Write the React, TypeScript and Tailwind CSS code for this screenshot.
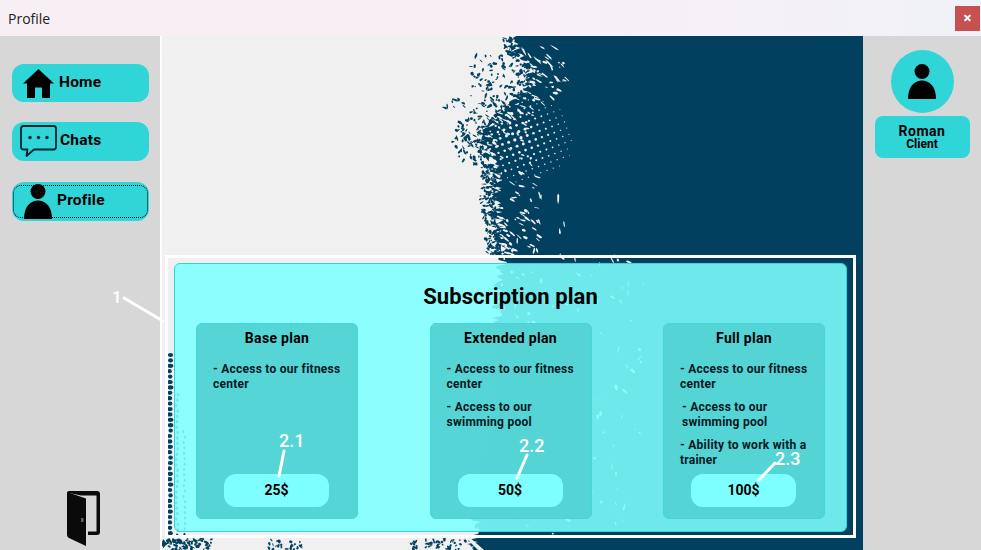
import React from "react";

const DARK = "#01405f";
const LIGHT = "#f0f0f0";

// seeded so the picture is the same on each run
const makeRandom = (seed: number) => () => {
   seed = (seed + 0x6d2b79f5) | 0;
   let t = Math.imul(seed ^ (seed >>> 15), 1 | seed);
   t = (t + Math.imul(t ^ (t >>> 7), 61 | t)) ^ t;
   return ((t ^ (t >>> 14)) >>> 0) / 4294967296;
};

const edgeKeys: [number, number][] = [
   [36, 512], [50, 516], [70, 530], [90, 528], [104, 506], [125, 490], [145, 482], [165, 494],
   [180, 497], [200, 495], [230, 500], [255, 502], [300, 497], [400, 495], [500, 478], [550, 472],
];

const edgeAt = (y: number) => {
   for (let i = 1; i < edgeKeys.length; i++) {
      const [y0, x0] = edgeKeys[i - 1];
      const [y1, x1] = edgeKeys[i];
      if (y <= y1) return x0 + ((x1 - x0) * (y - y0)) / (y1 - y0);
   }
   return 472;
};

const buildArt = () => {
   const rnd = makeRandom(41);

   // jagged little shard instead of a clean ellipse
   const shard = (x: number, y: number, len: number, thick: number, deg: number) => {
      const a = (deg * Math.PI) / 180;
      const n = 6;
      const out: string[] = [];
      for (let i = 0; i < n; i++) {
         const t = (i / n) * Math.PI * 2;
         const k = 0.6 + rnd() * 0.8;
         const px = Math.cos(t) * len * k;
         const py = Math.sin(t) * thick * k;
         out.push(`${(x + px * Math.cos(a) - py * Math.sin(a)).toFixed(1)},${(y + px * Math.sin(a) + py * Math.cos(a)).toFixed(1)}`);
      }
      return out.join(" ");
   };

   const pts: string[] = ["861,36"];
   for (let y = 36; y <= 550; y += 2) pts.push(`${(edgeAt(y) + (rnd() - 0.5) * 12).toFixed(1)},${y}`);
   pts.push("861,550");

   const darkSpecks: string[] = [];
   const lightSpecks: string[] = [];
   for (let i = 0; i < 520; i++) {
      const y = 38 + rnd() * 217;
      const reach = y < 55 ? 10 : y < 110 ? 60 : y < 165 ? 32 : 14;
      const d = Math.pow(rnd(), 1.5) * reach;
      darkSpecks.push(shard(edgeAt(y) - d - 1, y, 0.7 + rnd() * 2.4, 0.5 + rnd() * 1.1, rnd() * 180));
   }
   // light bites along the inner side of the edge
   for (let i = 0; i < 170; i++) {
      const y = 60 + rnd() * 195;
      const d = Math.pow(rnd(), 1.8) * 40;
      lightSpecks.push(shard(edgeAt(y) + d + 1, y, 0.8 + rnd() * 3.4, 0.4 + rnd() * 1, 10 + rnd() * 40));
   }
   for (let i = 0; i < 140; i++) {
      const y = 255 + rnd() * 285;
      const d = Math.pow(rnd(), 1.3) * 150;
      lightSpecks.push(shard(edgeAt(y) + d + 2, y, 0.6 + rnd() * 3.2, 0.4 + rnd() * 1, 20 + rnd() * 90));
   }
   for (let i = 0; i < 14; i++) {
      lightSpecks.push(shard(515 + rnd() * 50, 42 + rnd() * 40, 1.5 + rnd() * 4, 0.8, 30 + rnd() * 40));
      lightSpecks.push(shard(500 + rnd() * 65, 195 + rnd() * 58, 1.5 + rnd() * 4, 0.9, rnd() * 120));
   }

   // rotated halftone of light dots, fading out towards the dark side
   const dots: number[][] = [];
   const a = (-20 * Math.PI) / 180;
   for (let u = -80; u <= 80; u += 6.6) {
      for (let v = -60; v <= 60; v += 6.6) {
         const x = 522 + u * Math.cos(a) - v * Math.sin(a);
         const y = 138 + u * Math.sin(a) + v * Math.cos(a);
         const r = Math.hypot((x - 516) / 58, (y - 138) / 46);
         if (r < 1 && x > edgeAt(y) + 1) dots.push([x, y, 1.55 * (1.1 - r * 0.8)]);
      }
   }

   // dark halftone strip on the left and the specks under the frame
   const strip: number[][] = [];
   for (let y = 355; y < 536; y += 5.4) {
      strip.push([170 + (rnd() - 0.5) * 1.5, y, 2.2 + rnd() * 0.8, 2.1]);
      if (y > 390) strip.push([176 + rnd() * 2, y + 2, 1.3, 1.8]);
      if (y > 430) strip.push([183 + rnd() * 2, y + 1, 1, 1.5]);
   }
   const bottom: string[] = [];
   for (let i = 0; i < 150; i++) {
      const zone = rnd();
      const x = zone < 0.5 ? 163 + rnd() * 50 : zone < 0.66 ? 265 + rnd() * 38 : 410 + rnd() * 62;
      bottom.push(shard(x, 539 + rnd() * 11, 0.8 + rnd() * 1.7, 0.6 + rnd() * 1.2, rnd() * 180));
   }
   return { polygon: pts.join(" "), darkSpecks, lightSpecks, dots, strip, bottom };
};

const art = buildArt();

const SplashArt = () => (
   <svg viewBox="162 36 699 514" className="absolute inset-0 h-full w-full">
      <rect x="162" y="36" width="699" height="514" fill={LIGHT} />
      <polygon points={art.polygon} fill={DARK} />
      {art.darkSpecks.map((p, i) => (
         <polygon key={i} points={p} fill={DARK} />
      ))}
      {art.lightSpecks.map((p, i) => (
         <polygon key={i} points={p} fill={LIGHT} />
      ))}
      {art.dots.map(([x, y, r], i) => (
         <circle key={i} cx={x} cy={y} r={r} fill={LIGHT} />
      ))}
      {art.strip.map(([x, y, rx, ry], i) => (
         <ellipse key={i} cx={x} cy={y} rx={rx} ry={ry} fill={DARK} />
      ))}
      {art.bottom.map((p, i) => (
         <polygon key={i} points={p} fill={DARK} />
      ))}
      <path d="M468 536 L484 550 L478 550 L464 536 Z" fill={LIGHT} />
   </svg>
);

const HomeIcon = () => (
   <svg viewBox="0 0 31 29" className="h-[29px] w-[31px] shrink-0">
      <path d="M15.5 0 L31 14.5 L27 14.5 L27 29 L19 29 L19 18.5 L12 18.5 L12 29 L4 29 L4 14.5 L0 14.5 Z" fill="#000" />
   </svg>
);

const ChatIcon = () => (
   <svg viewBox="0 0 37 33" className="h-[33px] w-[37px] shrink-0">
      <path d="M3.5 1 H33.5 Q36 1 36 3.5 V22 Q36 24.5 33.5 24.5 H14 L6.5 31 L7.5 24.5 H3.5 Q1 24.5 1 22 V3.5 Q1 1 3.5 1 Z" fill="none" stroke="#04222e" strokeWidth="1.8" strokeLinejoin="round" />
      <circle cx="10" cy="12.5" r="1.7" fill="#04222e" />
      <circle cx="18.5" cy="12.5" r="1.7" fill="#04222e" />
      <circle cx="27" cy="12.5" r="1.7" fill="#04222e" />
   </svg>
);

const PersonIcon = ({ className }: { className: string }) => (
   <svg viewBox="0 0 28 35" className={className}>
      <circle cx="14" cy="7.5" r="7.5" fill="#000" />
      <path d="M0 35 C0 23 6 16.5 14 16.5 C22 16.5 28 23 28 35 Z" fill="#000" />
   </svg>
);

const DoorIcon = () => (
   <svg viewBox="0 0 34 55" className="h-[55px] w-[34px]">
      <path d="M1 2 Q1 0 3 0 H31 Q34 0 34 3 V41 Q34 44 31 44 H22 V40.5 H30.5 V4.5 H15 L1 1.5 Z" fill="#0a0a0a" />
      <path d="M1 1 L20 7.5 V55 L3 47 Q1 46 1 44 Z" fill="#0a0a0a" />
      <rect x="15" y="27" width="2.5" height="4" fill="#666" />
   </svg>
);

const NavButton = ({ icon, label, gap, active, className }: { icon: React.ReactNode; label: string; gap: string; active?: boolean; className: string }) => (
   <div className={`relative flex w-[137px] items-center rounded-[12px] bg-[#30d5d8] text-[15.5px] font-bold tracking-[0.2px] text-black ${className}`}>
      {active && <div className="absolute inset-x-px inset-y-[3px] rounded-[8px] border border-dotted border-black" />}
      {icon}
      <span className={gap}>{label}</span>
   </div>
);

const plans = [
   { title: "Base plan", price: "25$", items: [{ text: "- Access to our fitness center" }] },
   { title: "Extended plan", price: "50$", items: [{ text: "- Access to our fitness center" }, { text: "- Access to our swimming pool" }] },
   {
      title: "Full plan",
      price: "100$",
      items: [{ text: "- Access to our fitness center" }, { text: "- Access to our swimming pool", shift: true }, { text: "- Ability to work with a trainer" }],
   },
];

const PlanCard = ({ plan }: { plan: (typeof plans)[number] }) => (
   <div className="flex h-[196px] w-[162px] flex-col rounded-[6px] border border-[#40d8d8] bg-[#52d3d3]/95">
      <div className="pt-[5px] text-center text-[14px] leading-[18px] font-bold tracking-[0.3px] text-black">{plan.title}</div>
      <div className="flex flex-col gap-[8px] pt-[15px] pr-[6px] pl-[16px]">
         {plan.items.map((item) => (
            <p key={item.text} className={`text-[12px] leading-[15px] font-bold tracking-[0.25px] text-[#03181f] ${item.shift ? "pl-[2px]" : ""}`}>
               {item.text}
            </p>
         ))}
      </div>
      <div className="mt-auto mb-[11px] ml-[27px] flex h-[33px] w-[105px] items-center justify-center rounded-[12px] bg-[#7dffff] text-[14px] font-bold text-black">
         {plan.price}
      </div>
   </div>
);

const App = () => {
   return (
      <div className="relative flex h-[550px] w-[981px] flex-col overflow-hidden bg-[#d7d7d7] font-['Roboto',sans-serif]">
         {/* Title bar */}
         <div className="flex h-9 shrink-0 items-center justify-between bg-gradient-to-r from-[#f8eff5] via-[#f8eff5] to-[#f0f2f8] pl-2 pr-[1px]">
            <span className="font-['Open_Sans',sans-serif] text-[14px] text-[#222]">Profile</span>
            <div className="flex h-[25px] w-[25px] items-center justify-center bg-[#c75050] text-[15px] font-bold text-white">×</div>
         </div>

         <div className="flex min-h-0 flex-1">
            {/* Left menu */}
            <aside className="flex w-[162px] shrink-0 flex-col border-r-2 border-white pt-7 pl-3">
               <NavButton className="h-[38px] pl-[11px]" icon={<HomeIcon />} label="Home" gap="ml-[5px]" />
               <NavButton className="mt-5 h-[39px] pl-2" icon={<ChatIcon />} label="Chats" gap="-mt-0.5 ml-[3px]" />
               <NavButton className="mt-[21px] h-[39px] pl-3" active icon={<PersonIcon className="h-[35px] w-[28px] shrink-0" />} label="Profile" gap="-mt-0.5 ml-[5px]" />
               <div className="mt-auto mb-1 ml-[54px]">
                  <DoorIcon />
               </div>
            </aside>

            {/* Centre with the splash picture behind the plans */}
            <main className="relative flex flex-1 flex-col justify-end pr-[5px] pb-3 pl-[3px]">
               <SplashArt />
               <div className="relative h-[283px] border-[3px] border-white pt-[5px] pr-[6px] pb-[3px] pl-[6px]">
                  <div className="flex h-full flex-col rounded-[6px] border border-[#2fd8d8] bg-[rgba(125,255,255,0.88)] px-[21px]">
                     <h1 className="pt-[20px] pb-[13px] text-center text-[22px] leading-[26px] font-bold tracking-[0.1px] text-black">Subscription plan</h1>
                     <div className="flex justify-between">
                        {plans.map((plan) => (
                           <PlanCard key={plan.title} plan={plan} />
                        ))}
                     </div>
                  </div>
               </div>
            </main>

            {/* User block */}
            <aside className="flex w-[120px] shrink-0 flex-col items-center border-l-2 border-[#01405f] pt-[14px]">
               <div className="flex h-[63px] w-[63px] items-center justify-center rounded-full bg-[#30d5d8]">
                  <PersonIcon className="h-[35px] w-[28px]" />
               </div>
               <div className="mt-[3px] flex h-[42px] w-[95px] flex-col items-center justify-center rounded-[8px] bg-[#30d5d8] font-bold text-black">
                  <span className="text-[14px] leading-[14px] tracking-[0.5px]">Roman</span>
                  <span className="text-[12px] leading-[12px]">Client</span>
               </div>
            </aside>
         </div>

         {/* Numbered callouts over the page */}
         <svg viewBox="0 0 981 550" className="pointer-events-none absolute inset-0 h-full w-full">
            <g stroke="#fff" strokeWidth="3" strokeLinecap="round">
               <line x1="124" y1="298" x2="163" y2="321" />
               <line x1="284" y1="451" x2="279" y2="476" />
               <line x1="527" y1="455" x2="517" y2="478" />
               <line x1="775" y1="463" x2="759" y2="480" />
            </g>
         </svg>
         <span className="absolute top-[287px] left-[112px] text-[17px] leading-5 font-medium text-white">1</span>
         <span className="absolute top-[431px] left-[279px] text-[18px] leading-5 font-medium text-white">2.1</span>
         <span className="absolute top-[436px] left-[519px] text-[18px] leading-5 font-medium text-white">2.2</span>
         <span className="absolute top-[449px] left-[775px] text-[18px] leading-5 font-medium text-white">2.3</span>
      </div>
   );
};

export default App;
